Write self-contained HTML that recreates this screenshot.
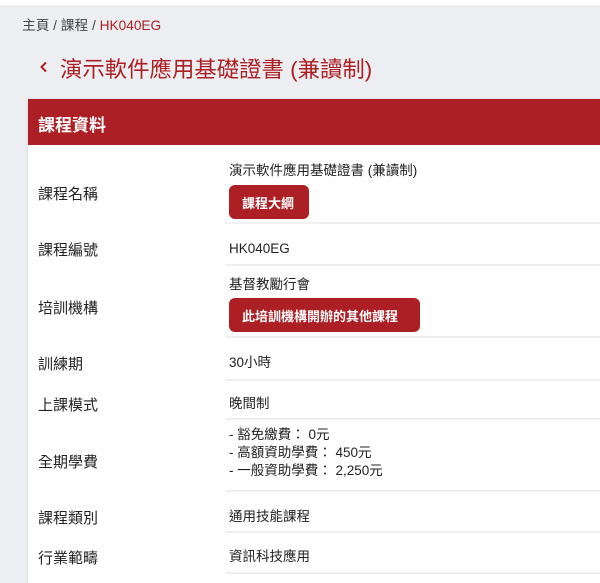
<!DOCTYPE html>
<html><head><meta charset="utf-8"><style>
*{margin:0;padding:0;box-sizing:border-box}
body{width:600px;height:583px;overflow:hidden;background:#eceef1;font-family:"Liberation Sans","Noto Sans CJK TC",sans-serif;position:relative;color:#222}
.top{position:absolute;left:0;top:0;width:600px;height:5px;background:#fff}
.bc{position:absolute;left:22px;top:14px;font-size:13.7px;color:#444}
.bc span{color:#ac1f24}
.title{position:absolute;left:60px;top:52px;font-size:22.4px;color:#ac1f24}
.chev{position:absolute;left:39px;top:61px}
.card{position:absolute;left:28px;top:99px;width:572px;height:484px;background:#fff;box-shadow:0 0 4px rgba(0,0,0,.08)}
.hd{height:46px;background:#ac1f24;color:#fff;font-size:17px;font-weight:bold;padding:12px 10px}
.lab{position:absolute;left:10px;font-size:15px;color:#222}
.val{position:absolute;left:201px;font-size:13.5px;color:#222;line-height:18px}
.ln{position:absolute;left:197px;right:0;height:2px;background:#f0f0f0}
.btn{position:absolute;left:201px;height:34px;background:#ac1f24;color:#fff;border-radius:6px;font-size:13px;font-weight:bold;padding:8px 13px}
</style></head><body>
<div class="top"></div>
<div class="bc">主頁 / 課程 / <span>HK040EG</span></div>
<svg class="chev" width="10" height="12" viewBox="0 0 10 12"><path d="M7 1.5L2.5 6L7 10.5" fill="none" stroke="#ac1f24" stroke-width="2"/></svg>
<div class="title">演示軟件應用基礎證書 (兼讀制)</div>
<div class="card">
<div class="hd">課程資料</div>
<div class="lab" style="top:84px">課程名稱</div>
<div class="val" style="top:63px">演示軟件應用基礎證書 (兼讀制)</div>
<div class="btn" style="top:86px;width:80px">課程大綱</div>
<div class="ln" style="top:123px"></div>
<div class="lab" style="top:140px">課程編號</div>
<div class="val" style="top:141px">HK040EG</div>
<div class="ln" style="top:165px"></div>
<div class="lab" style="top:198px">培訓機構</div>
<div class="val" style="top:177px">基督教勵行會</div>
<div class="btn" style="top:199px;width:191px">此培訓機構開辦的其他課程</div>
<div class="ln" style="top:237px"></div>
<div class="lab" style="top:254px">訓練期</div>
<div class="val" style="top:255px">30小時</div>
<div class="ln" style="top:280px"></div>
<div class="lab" style="top:295px">上課模式</div>
<div class="val" style="top:296px">晚間制</div>
<div class="ln" style="top:319px"></div>
<div class="lab" style="top:352px">全期學費</div>
<div class="val" style="top:327px">- 豁免繳費： 0元<br>- 高額資助學費： 450元<br>- 一般資助學費： 2,250元</div>
<div class="ln" style="top:391px"></div>
<div class="lab" style="top:408px">課程類別</div>
<div class="val" style="top:409px">通用技能課程</div>
<div class="ln" style="top:432px"></div>
<div class="lab" style="top:448px">行業範疇</div>
<div class="val" style="top:449px">資訊科技應用</div>
<div class="ln" style="top:473px"></div>
</div>
</body></html>
